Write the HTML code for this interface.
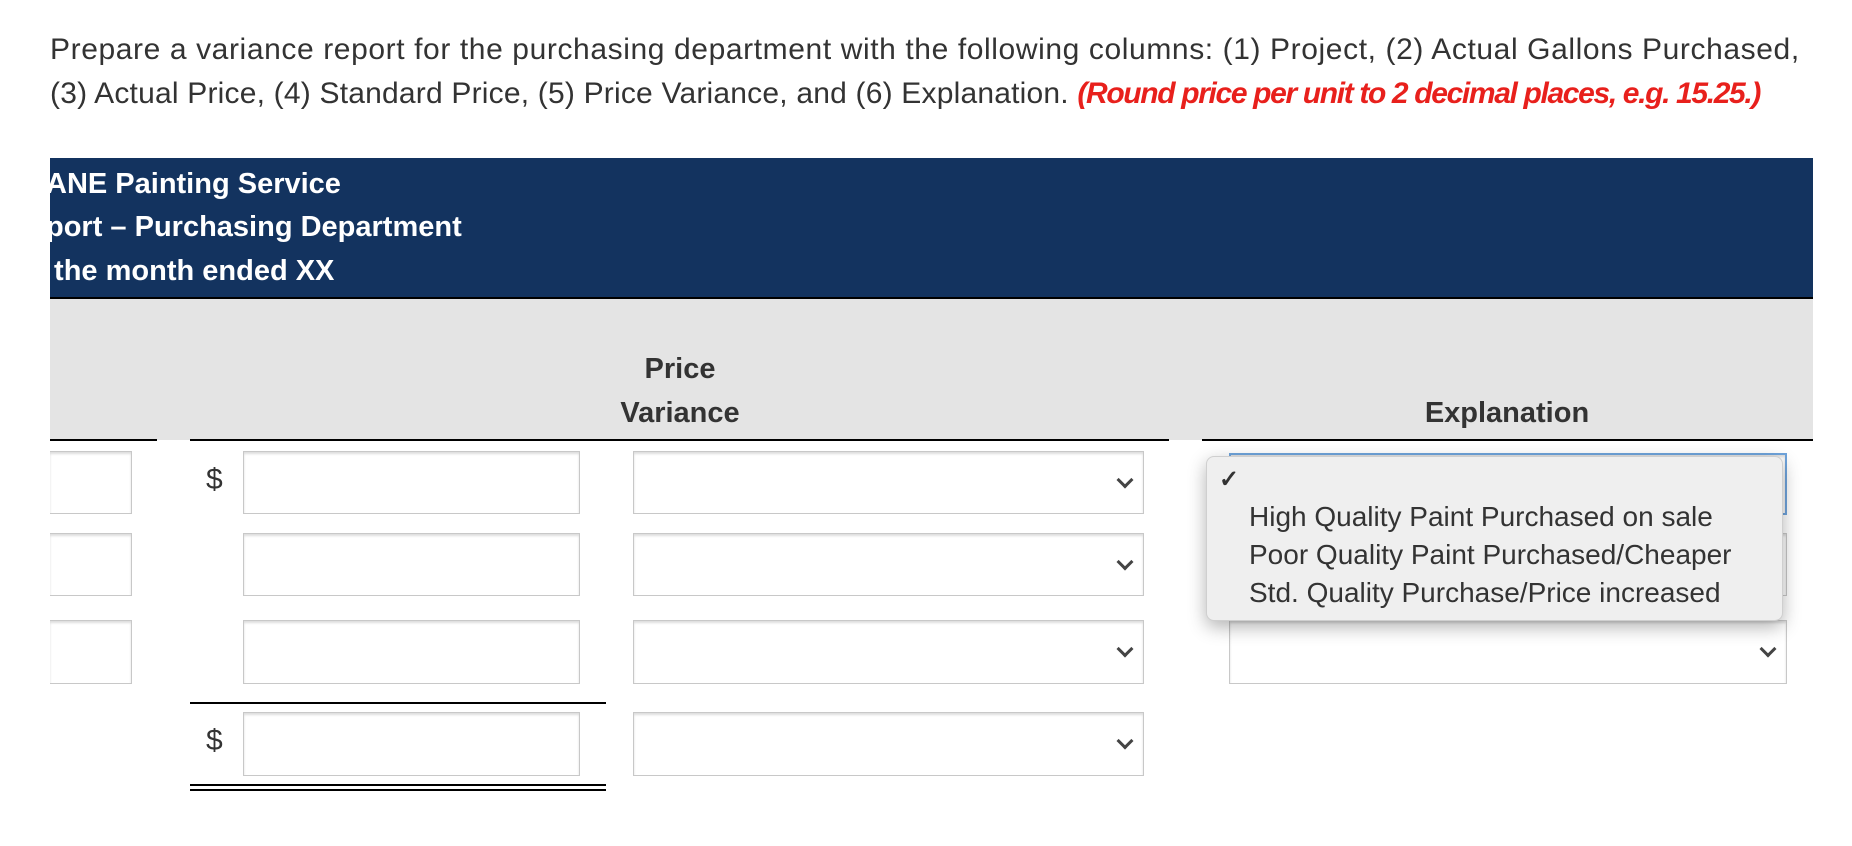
<!DOCTYPE html>
<html><head><meta charset="utf-8"><style>
body{margin:0;width:1852px;height:846px;background:#fff;position:relative;overflow:hidden;font-family:"Liberation Sans",sans-serif;color:#333}
.a{position:absolute}
.q{left:50px;top:28px;font-size:30px;line-height:44px;color:#333;letter-spacing:0.2px;white-space:nowrap}
.q span{letter-spacing:0.6px}
.q b{color:#e8201c;font-style:italic;letter-spacing:-1.35px}
.hd{left:50px;top:158px;width:1763px;height:139px;background:#13335f;border-bottom:2px solid #000;overflow:hidden}
.hd div{position:absolute;left:-4px;color:#fff;font-weight:bold;font-size:29px;white-space:nowrap}
.gr{left:50px;top:299px;width:1763px;height:141px;background:#e4e4e4}
.th{font-weight:bold;font-size:29px;color:#333;text-align:center}
.ln{height:2px;background:#000}
.in{background:#fff;border:1px solid #c8c8c8;box-shadow:inset 0 2px 2px #ddd;box-sizing:border-box}
.ch{position:absolute;right:12px;top:50%;width:9px;height:9px;border-right:3px solid #444;border-bottom:3px solid #444;transform:translateY(-75%) rotate(45deg)}
.d{font-size:30px;color:#333}
.pop{left:1206px;top:456px;width:577px;height:165px;background:#efefef;border:1px solid #cfcfcf;border-radius:8px;box-shadow:0 6px 18px rgba(0,0,0,.3);box-sizing:border-box}
.pop div{position:absolute;left:42px;font-size:28px;color:#333;white-space:nowrap}
</style></head><body>
<div class="a q"><span>Prepare a variance report for the purchasing department with the following columns: (1) Project, (2) Actual Gallons Purchased,</span><br>(3) Actual Price, (4) Standard Price, (5) Price Variance, and (6) Explanation. <b>(Round price per unit to 2 decimal places, e.g. 15.25.)</b></div>
<div class="a hd"><div style="top:10px">ANE Painting Service</div><div style="top:53px">port – Purchasing Department</div><div style="top:97px">&nbsp;the month ended XX</div></div>
<div class="a gr"></div>
<div class="a th" style="left:580px;width:200px;top:353px">Price</div>
<div class="a th" style="left:580px;width:200px;top:397px">Variance</div>
<div class="a th" style="left:1407px;width:200px;top:397px">Explanation</div>
<div class="a ln" style="left:50px;top:439px;width:107px"></div>
<div class="a ln" style="left:190px;top:439px;width:979px"></div>
<div class="a ln" style="left:1202px;top:439px;width:611px"></div>

<div class="a in" style="left:50px;top:451px;width:82px;height:63px;border-left:none"></div>
<div class="a in" style="left:50px;top:533px;width:82px;height:63px;border-left:none"></div>
<div class="a in" style="left:50px;top:620px;width:82px;height:64px;border-left:none"></div>

<div class="a d" style="left:206px;top:463px">$</div>
<div class="a d" style="left:206px;top:724px">$</div>
<div class="a in" style="left:243px;top:451px;width:337px;height:63px"></div>
<div class="a in" style="left:243px;top:533px;width:337px;height:63px"></div>
<div class="a in" style="left:243px;top:620px;width:337px;height:64px"></div>
<div class="a in" style="left:243px;top:712px;width:337px;height:64px"></div>
<div class="a ln" style="left:190px;top:702px;width:416px"></div>
<div class="a ln" style="left:190px;top:784px;width:416px"></div>
<div class="a ln" style="left:190px;top:789px;width:416px"></div>

<div class="a in" style="left:633px;top:451px;width:511px;height:63px"><span class="ch"></span></div>
<div class="a in" style="left:633px;top:533px;width:511px;height:63px"><span class="ch"></span></div>
<div class="a in" style="left:633px;top:620px;width:511px;height:64px"><span class="ch"></span></div>
<div class="a in" style="left:633px;top:712px;width:511px;height:64px"><span class="ch"></span></div>

<div class="a in" style="left:1229px;top:453px;width:558px;height:62px;border:2px solid #6fa4dc"></div>
<div class="a in" style="left:1229px;top:533px;width:558px;height:63px"></div>
<div class="a in" style="left:1229px;top:620px;width:558px;height:64px"><span class="ch"></span></div>

<div class="a pop">
<div style="left:12px;top:8px;font-size:24px;font-weight:bold">✓</div>
<div style="top:44px">High Quality Paint Purchased on sale</div>
<div style="top:82px">Poor Quality Paint Purchased/Cheaper</div>
<div style="top:120px">Std. Quality Purchase/Price increased</div>
</div>
</body></html>
